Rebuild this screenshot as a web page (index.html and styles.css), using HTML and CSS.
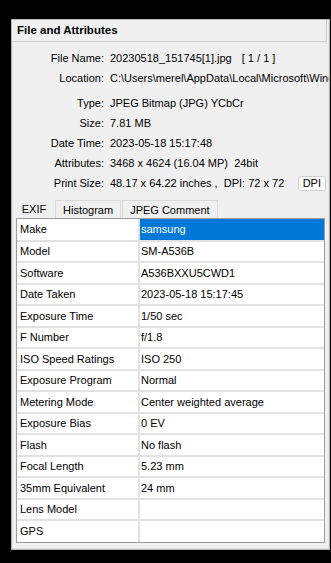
FILE: index.html
```html
<!DOCTYPE html>
<html lang="en">
<head>
  <meta charset="UTF-8">
  <title>File and Attributes</title>
  <link rel="stylesheet" href="styles.css">
</head>
<body>

  <div class="panel">
    <div class="titulo">File and Attributes</div>

    <div class="info">
      <div class="fila"><span class="etiqueta">File Name:</span><span class="valor">20230518_151745[1].jpg<span class="contador">[ 1 / 1 ]</span></span></div>
      <div class="fila"><span class="etiqueta">Location:</span><span class="valor">C:\Users\merel\AppData\Local\Microsoft\Wind</span></div>
      <div class="fila separada"><span class="etiqueta">Type:</span><span class="valor">JPEG Bitmap (JPG) YCbCr</span></div>
      <div class="fila"><span class="etiqueta">Size:</span><span class="valor">7.81 MB</span></div>
      <div class="fila"><span class="etiqueta">Date Time:</span><span class="valor">2023-05-18 15:17:48</span></div>
      <div class="fila"><span class="etiqueta">Attributes:</span><span class="valor">3468 x 4624 (16.04 MP)&nbsp; 24bit</span></div>
      <div class="fila"><span class="etiqueta">Print Size:</span><span class="valor">48.17 x 64.22 inches ,&nbsp; DPI: 72 x 72</span><button class="boton-dpi">DPI</button></div>
    </div>

    <div class="pestanas">
      <div class="pestana activa">EXIF</div>
      <div class="pestana">Histogram</div>
      <div class="pestana">JPEG Comment</div>
    </div>

    <div class="tabla-marco">
      <table class="tabla" id="exif"></table>
    </div>
  </div>

  <script>
    const datos = [
      ['Make', 'samsung'],
      ['Model', 'SM-A536B'],
      ['Software', 'A536BXXU5CWD1'],
      ['Date Taken', '2023-05-18 15:17:45'],
      ['Exposure Time', '1/50 sec'],
      ['F Number', 'f/1.8'],
      ['ISO Speed Ratings', 'ISO 250'],
      ['Exposure Program', 'Normal'],
      ['Metering Mode', 'Center weighted average'],
      ['Exposure Bias', '0 EV'],
      ['Flash', 'No flash'],
      ['Focal Length', '5.23 mm'],
      ['35mm Equivalent', '24 mm'],
      ['Lens Model', ''],
      ['GPS', '']
    ];

    const tabla = document.getElementById('exif');
    datos.forEach((d, i) => {
      const tr = document.createElement('tr');
      tr.innerHTML = `<td class="col-nombre">${d[0]}</td><td class="col-valor">${d[1]}</td>`;
      if (i === 0) tr.children[1].classList.add('seleccionado');
      tabla.appendChild(tr);
    });
  </script>

</body>
</html>
```

FILE: styles.css
```css
* {
  box-sizing: border-box;
}

body {
  margin: 0;
  background: #000000;
  padding: 19px 1px 0 11px;
  font-family: 'Liberation Sans', Arial, sans-serif;
  font-size: 11px;
  color: #000000;
  overflow: hidden;
}

.panel {
  width: 319px;
  height: 531px;
  background: #f0f0f0;
  border: 1px solid #b4b4b4;
  box-shadow: inset 0 0 0 1px #e4e4e4;
  overflow: hidden;
}

.titulo {
  height: 22px;
  margin: 0 2px 0 0;
  padding: 4px 5px 0;
  font-size: 11.5px;
  font-weight: bold;
  border: 1px solid #cfcfcf;
  border-top: none;
  border-left: none;
  background: #f0f0f0;
}

.info {
  padding-top: 6px;
}

.fila {
  display: flex;
  align-items: center;
  height: 20px;
  white-space: nowrap;
}

.separada {
  margin-top: 5px;
}

.etiqueta {
  width: 92px;
  flex: none;
  text-align: right;
}

.valor {
  margin-left: 6px;
  overflow: hidden;
}

.contador {
  margin-left: 10px;
}

.boton-dpi {
  margin: 0 3px 0 auto;
  height: 15px;
  padding: 0 4px;
  font-family: inherit;
  font-size: 11px;
  line-height: 13px;
  color: #000000;
  background: #fdfdfd;
  border: 1px solid #cfcfcf;
  border-radius: 3px;
}

.pestanas {
  display: flex;
  align-items: flex-end;
  height: 20px;
  margin-top: 5px;
  padding-left: 2px;
}

.pestana {
  height: 18px;
  padding: 3px 7px 0;
  border: 1px solid #dadada;
  border-bottom: none;
  margin-right: 1px;
  background: #f0f0f0;
}

.pestana.activa {
  height: 20px;
  width: 40px;
  padding: 4px 0 0;
  text-align: center;
  border-color: #f0f0f0;
}

.tabla-marco {
  margin: 0 4px 0 4px;
  border: 1px solid #9c9c9c;
  background: #ffffff;
}

.tabla {
  width: 100%;
  border-collapse: collapse;
}

.tabla td {
  height: 21.5px;
  padding: 0 3px;
  border: 2px solid #e2e2e2;
  white-space: nowrap;
}

.tabla tr:first-child td {
  border-top: none;
}

.tabla tr:last-child td {
  border-bottom: none;
}

.col-nombre {
  width: 122px;
  border-left: none !important;
}

.col-valor {
  padding-left: 1px !important;
  border-right: none !important;
}

.seleccionado {
  background: #0078d7;
  color: #ffffff;
}
```
